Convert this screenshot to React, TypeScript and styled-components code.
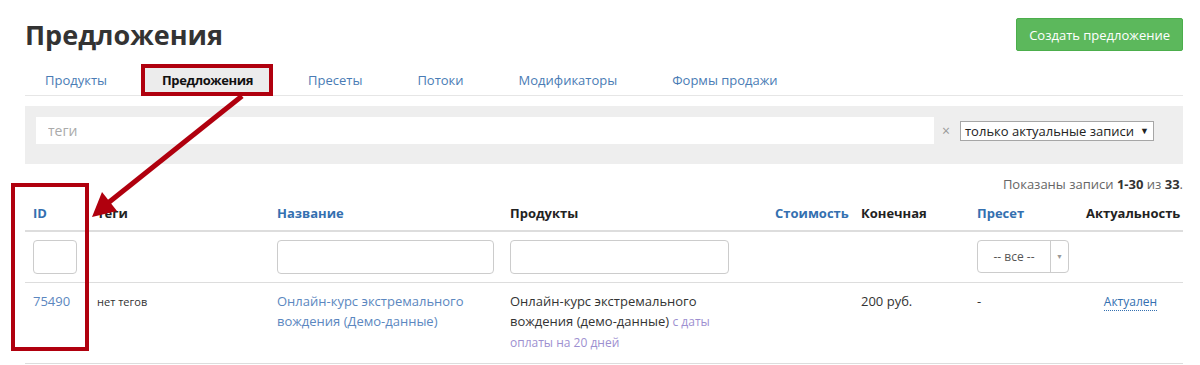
import styled, { createGlobalStyle } from "styled-components";

const GlobalStyle = createGlobalStyle`
  body {
    margin: 0;
    background: #fff;
    font-family: "Open Sans", "Liberation Sans", sans-serif;
    color: #333;
  }
`;

const Page = styled.div`
  position: relative;
  width: 1158px;
  padding: 18px 17px 0 25px;
`;

const Top = styled.div`
  display: flex;
  justify-content: space-between;
  align-items: flex-start;
`;

const Title = styled.h1`
  margin: 0;
  font-size: 27px;
  line-height: 33px;
  font-weight: 700;
  color: #333;
`;

const CreateButton = styled.button`
  height: 33px;
  padding: 0 12px;
  background: #5cb85c;
  border: 1px solid #4cae4c;
  border-radius: 2px;
  color: #fff;
  font-family: inherit;
  font-size: 13px;
`;

const Tabs = styled.ul`
  display: flex;
  gap: 15px;
  list-style: none;
  margin: 14px 0 0;
  padding: 0;
  border-bottom: 1px solid #e6e6e6;
`;

const Tab = styled.li<{ $active?: boolean }>`
  padding: 0 20px;
  line-height: 30px;
  font-size: 13px;
  color: ${(p) => (p.$active ? "#111" : "#4a7cb5")};
  font-weight: ${(p) => (p.$active ? 700 : 400)};
  letter-spacing: ${(p) => (p.$active ? "-0.4px" : "0")};
  background: ${(p) => (p.$active ? "#ececec" : "transparent")};
`;

const FilterPanel = styled.div`
  display: flex;
  align-items: center;
  margin-top: 10px;
  padding: 11px 29px 20px 11px;
  background: #eee;
`;

const TagInput = styled.input`
  flex: 1;
  height: 27px;
  box-sizing: border-box;
  border: none;
  padding: 0 12px;
  font-family: inherit;
  font-size: 14px;
  background: #fff;
  &::placeholder {
    color: #aaa;
  }
`;

const Clear = styled.span`
  margin: 0 10px 0 8px;
  color: #999;
  font-size: 14px;
`;

const StatusSelect = styled.div`
  display: flex;
  align-items: center;
  gap: 6px;
  height: 20px;
  box-sizing: border-box;
  padding: 0 4px;
  border: 1px solid #a6a6a6;
  background: #fff;
  font-size: 13px;
  color: #222;
`;

const Caret = styled.span`
  font-size: 9px;
  color: #222;
`;

const Summary = styled.div`
  margin-top: 11px;
  text-align: right;
  font-size: 13px;
  line-height: 18px;
  color: #666;
  b {
    color: #333;
  }
`;

const Table = styled.table`
  width: 1158px;
  margin-top: 3px;
  border-collapse: collapse;
  table-layout: fixed;
`;

const Th = styled.th<{ $link?: boolean; $center?: boolean }>`
  padding: 8px;
  line-height: 18px;
  font-size: 13px;
  font-weight: 700;
  text-align: ${(p) => (p.$center ? "center" : "left")};
  color: ${(p) => (p.$link ? "#3470b0" : "#222")};
  border-bottom: 2px solid #ddd;
`;

const Td = styled.td<{ $center?: boolean }>`
  padding: 8px;
  vertical-align: top;
  font-size: 13px;
  line-height: 20px;
  text-align: ${(p) => (p.$center ? "center" : "left")};
  border-bottom: 1px solid #ddd;
`;

const DataTd = styled(Td)`
  height: 81px;
  box-sizing: border-box;
`;

const ProductText = styled.div`
  max-width: 228px;
`;

const FieldInput = styled.input<{ $w: number }>`
  display: block;
  width: ${(p) => p.$w}px;
  height: 34px;
  box-sizing: border-box;
  border: 1px solid #ccc;
  border-radius: 4px;
`;

const PresetSelect = styled.div`
  display: flex;
  width: 92px;
  height: 33px;
  box-sizing: border-box;
  border: 1px solid #ccc;
  border-radius: 4px;
  font-size: 12px;
  color: #555;
`;

const PresetValue = styled.span`
  flex: 1;
  display: flex;
  align-items: center;
  justify-content: center;
  border-right: 1px solid #ccc;
`;

const PresetCaret = styled.span`
  width: 17px;
  display: flex;
  align-items: center;
  justify-content: center;
  font-size: 7px;
  color: #999;
`;

const Link = styled.a<{ $soft?: boolean }>`
  color: ${(p) => (p.$soft ? "#5b87c0" : "#3470b0")};
  text-decoration: none;
`;

const NoTags = styled.span`
  font-size: 11px;
  color: #333;
`;

const Note = styled.span`
  font-size: 12px;
  color: #9d8fd0;
`;

const Status = styled.span`
  font-size: 12px;
  color: #3470b0;
  border-bottom: 1px dotted #3470b0;
`;

const Annotations = styled.svg`
  position: absolute;
  left: 0;
  top: 0;
  pointer-events: none;
`;

const tabs = ["Продукты", "Предложения", "Пресеты", "Потоки", "Модификаторы", "Формы продажи"];
const widths = [64, 180, 233, 265, 86, 116, 109, 105];

export default function App() {
  return (
    <>
      <GlobalStyle />
      <Page>
        <Top>
          <Title>Предложения</Title>
          <CreateButton>Создать предложение</CreateButton>
        </Top>
        <Tabs>
          {tabs.map((t) => (
            <Tab key={t} $active={t === "Предложения"}>
              {t}
            </Tab>
          ))}
        </Tabs>
        <FilterPanel>
          <TagInput placeholder="теги" />
          <Clear>×</Clear>
          <StatusSelect>
            только актуальные записи <Caret>▼</Caret>
          </StatusSelect>
        </FilterPanel>
        <Summary>
          Показаны записи <b>1-30</b> из <b>33</b>.
        </Summary>
        <Table>
          <colgroup>
            {widths.map((w, i) => (
              <col key={i} style={{ width: w }} />
            ))}
          </colgroup>
          <thead>
            <tr>
              <Th $link>ID</Th>
              <Th>Теги</Th>
              <Th $link>Название</Th>
              <Th>Продукты</Th>
              <Th $link>Стоимость</Th>
              <Th>Конечная</Th>
              <Th $link>Пресет</Th>
              <Th $center>Актуальность</Th>
            </tr>
          </thead>
          <tbody>
            <tr>
              <Td><FieldInput $w={44} /></Td>
              <Td />
              <Td><FieldInput $w={217} /></Td>
              <Td><FieldInput $w={219} /></Td>
              <Td />
              <Td />
              <Td>
                <PresetSelect>
                  <PresetValue>-- все --</PresetValue>
                  <PresetCaret>▼</PresetCaret>
                </PresetSelect>
              </Td>
              <Td />
            </tr>
            <tr>
              <DataTd><Link $soft>75490</Link></DataTd>
              <DataTd><NoTags>нет тегов</NoTags></DataTd>
              <DataTd>
                <Link $soft>Онлайн-курс экстремального вождения (Демо-данные)</Link>
              </DataTd>
              <DataTd>
                <ProductText>
                  Онлайн-курс экстремального вождения (демо-данные){" "}
                  <Note>с даты оплаты на 20 дней</Note>
                </ProductText>
              </DataTd>
              <DataTd />
              <DataTd>200 руб.</DataTd>
              <DataTd>-</DataTd>
              <DataTd $center>
                <Status>Актуален</Status>
              </DataTd>
            </tr>
          </tbody>
        </Table>
        <Annotations width="1200" height="365" viewBox="0 0 1200 365">
          <rect x="143" y="66" width="128" height="28" fill="none" stroke="#b0000e" strokeWidth="4" />
          <rect x="13" y="185" width="74" height="164" fill="none" stroke="#b0000e" strokeWidth="4" />
          <line x1="242" y1="96" x2="108" y2="203" stroke="#b0000e" strokeWidth="5" />
          <polygon points="92,217 117,211 102,192" fill="#b0000e" />
        </Annotations>
      </Page>
    </>
  );
}
